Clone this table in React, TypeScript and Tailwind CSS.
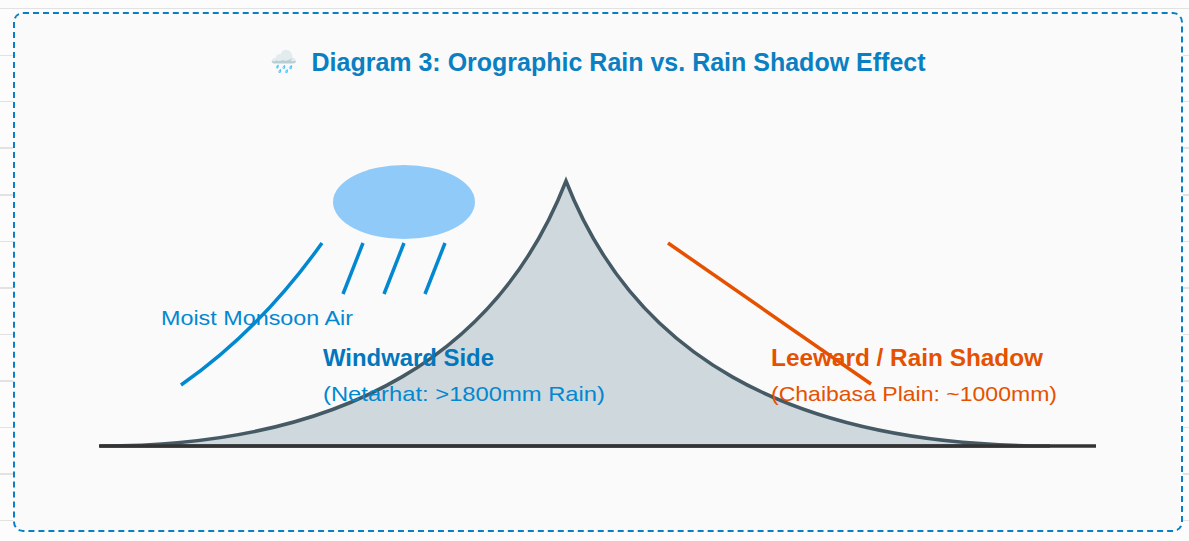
import React from "react";

const hand = { fontFamily: '"Liberation Sans", Arial, sans-serif' };

function Diagram() {
  return (
    <svg width="1166" height="450" viewBox="15 80 1166 450" className="block shrink-0">
      {/* mountain */}
      <path
        d="M100,446 C350,446 500,350 566,181 C632,350 782,446 1050,446 Z"
        fill="#cfd8dc"
        stroke="#455a64"
        strokeWidth="3.5"
      />
      {/* ground */}
      <line x1="99" y1="446" x2="1096" y2="446" stroke="#333333" strokeWidth="3.5" />
      {/* cloud */}
      <ellipse cx="404" cy="202" rx="71" ry="37" fill="#90caf9" />
      {/* rain */}
      <g stroke="#0288d1" strokeWidth="3.5">
        <line x1="363" y1="243" x2="343" y2="294" />
        <line x1="404" y1="243" x2="384" y2="294" />
        <line x1="445" y1="243" x2="425" y2="294" />
      </g>
      {/* moist air */}
      <path d="M181,385 Q260,330 322,243" fill="none" stroke="#0288d1" strokeWidth="3.5" />
      {/* dry descending air */}
      <line x1="668" y1="243" x2="871" y2="384" stroke="#e65100" strokeWidth="3.5" />

      <g style={hand}>
        <text x="161" y="325" fontSize="21" fill="#0288d1" textLength="192" lengthAdjust="spacingAndGlyphs">
          Moist Monsoon Air
        </text>
        <text x="323" y="366" fontSize="23" fontWeight="700" fill="#0277bd" textLength="171" lengthAdjust="spacingAndGlyphs">
          Windward Side
        </text>
        <text x="323" y="401" fontSize="21" fill="#0288d1" textLength="282" lengthAdjust="spacingAndGlyphs">
          (Netarhat: &gt;1800mm Rain)
        </text>
        <text x="771" y="366" fontSize="23" fontWeight="700" fill="#e65100" textLength="272" lengthAdjust="spacingAndGlyphs">
          Leeward / Rain Shadow
        </text>
        <text x="771" y="401" fontSize="21" fill="#e65100" textLength="286" lengthAdjust="spacingAndGlyphs">
          (Chaibasa Plain: ~1000mm)
        </text>
      </g>
    </svg>
  );
}

export default function App() {
  return (
    <div className="w-[1189px] h-[541px] overflow-hidden bg-[#fcfcfc] bg-[repeating-linear-gradient(to_bottom,transparent_0px,transparent_8px,#e2e2e2_8px,#e2e2e2_9.5px,transparent_9.5px,transparent_46.5px)] pt-[12px] pl-[13px]">
      <div className="w-[1170px] h-[520px] border-2 border-dashed border-[#0a80c4] rounded-[10px] bg-[#fafafa] flex flex-col items-center overflow-hidden">
        <h2
          className="mt-[30px] h-[36px] shrink-0 flex items-center gap-[14px] text-[25px] font-bold text-[#0a7fc2] leading-none"
          style={hand}
        >
          <span className="text-[22px]">🌧️</span>
          <span>Diagram 3: Orographic Rain vs. Rain Shadow Effect</span>
        </h2>
        <Diagram />
      </div>
    </div>
  );
}
